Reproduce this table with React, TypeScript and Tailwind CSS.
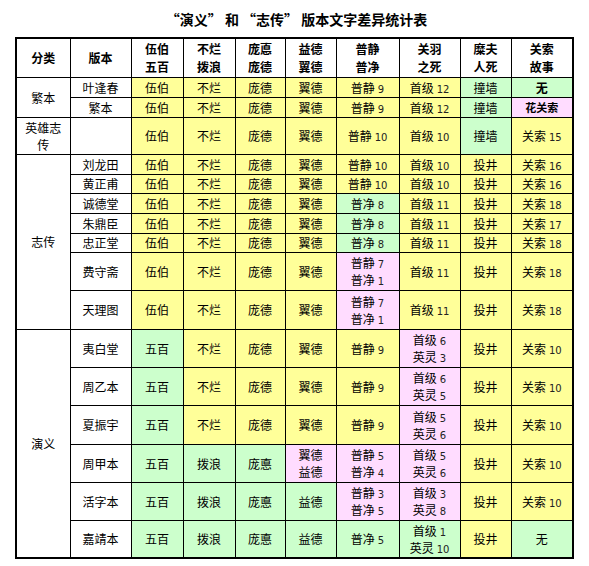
import React from "react";

type Line = [string, string?];
type Cell = { l: Line[]; c: string; b?: string };

const Y = "bg-[#ffff99]";
const G = "bg-[#ccffcc]";
const P = "bg-[#ffdcff]";

const c = (color: string, ...l: Line[]): Cell => ({ l, c: color });

type Row = {
  cat?: { label: React.ReactNode; span: number };
  ver: string;
  h: string;
  cells: Cell[];
};

const base = (
  wb: Cell,
  bl: Cell,
  pd: Cell,
  yd: Cell,
  pj: Cell,
  sj: Cell,
  mf: Cell,
  gs: Cell
): Cell[] => [wb, bl, pd, yd, pj, sj, mf, gs];

const rows: Row[] = [
  {
    cat: { label: "繁本", span: 2 },
    ver: "叶逢春",
    h: "h-[20px]",
    cells: base(
      c(Y, ["伍伯"]), c(Y, ["不烂"]), c(Y, ["庞德"]), c(Y, ["翼德"]),
      c(Y, ["普静", "9"]), c(Y, ["首级", "12"]), c(G, ["撞墙"]),
      { l: [["无"]], c: G, b: "font-bold" }
    ),
  },
  {
    ver: "繁本",
    h: "h-[20px]",
    cells: base(
      c(Y, ["伍伯"]), c(Y, ["不烂"]), c(Y, ["庞德"]), c(Y, ["翼德"]),
      c(Y, ["普静", "9"]), c(Y, ["首级", "12"]), c(G, ["撞墙"]),
      { l: [["花关索"]], c: P, b: "font-bold text-[11px]" }
    ),
  },
  {
    cat: { label: (<>英雄志<br />传</>), span: 1 },
    ver: "",
    h: "h-[37px]",
    cells: base(
      c(Y, ["伍伯"]), c(Y, ["不烂"]), c(Y, ["庞德"]), c(Y, ["翼德"]),
      c(Y, ["普静", "10"]), c(Y, ["首级", "10"]), c(G, ["撞墙"]), c(Y, ["关索", "15"])
    ),
  },
  {
    cat: { label: "志传", span: 7 },
    ver: "刘龙田",
    h: "h-[20px]",
    cells: base(
      c(Y, ["伍伯"]), c(Y, ["不烂"]), c(Y, ["庞德"]), c(Y, ["翼德"]),
      c(Y, ["普静", "10"]), c(Y, ["首级", "10"]), c(Y, ["投井"]), c(Y, ["关索", "16"])
    ),
  },
  {
    ver: "黄正甫",
    h: "h-[19px]",
    cells: base(
      c(Y, ["伍伯"]), c(Y, ["不烂"]), c(Y, ["庞德"]), c(Y, ["翼德"]),
      c(Y, ["普静", "10"]), c(Y, ["首级", "10"]), c(Y, ["投井"]), c(Y, ["关索", "16"])
    ),
  },
  {
    ver: "诚德堂",
    h: "h-[20px]",
    cells: base(
      c(Y, ["伍伯"]), c(Y, ["不烂"]), c(Y, ["庞德"]), c(Y, ["翼德"]),
      c(G, ["普净", "8"]), c(Y, ["首级", "11"]), c(Y, ["投井"]), c(Y, ["关索", "18"])
    ),
  },
  {
    ver: "朱鼎臣",
    h: "h-[20px]",
    cells: base(
      c(Y, ["伍伯"]), c(Y, ["不烂"]), c(Y, ["庞德"]), c(Y, ["翼德"]),
      c(G, ["普净", "8"]), c(Y, ["首级", "11"]), c(Y, ["投井"]), c(Y, ["关索", "17"])
    ),
  },
  {
    ver: "忠正堂",
    h: "h-[19px]",
    cells: base(
      c(Y, ["伍伯"]), c(Y, ["不烂"]), c(Y, ["庞德"]), c(Y, ["翼德"]),
      c(G, ["普净", "8"]), c(Y, ["首级", "11"]), c(Y, ["投井"]), c(Y, ["关索", "18"])
    ),
  },
  {
    ver: "费守斋",
    h: "h-[38px]",
    cells: base(
      c(Y, ["伍伯"]), c(Y, ["不烂"]), c(Y, ["庞德"]), c(Y, ["翼德"]),
      c(P, ["普静", "7"], ["普净", "1"]), c(Y, ["首级", "11"]), c(Y, ["投井"]), c(Y, ["关索", "18"])
    ),
  },
  {
    ver: "天理图",
    h: "h-[39px]",
    cells: base(
      c(Y, ["伍伯"]), c(Y, ["不烂"]), c(Y, ["庞德"]), c(Y, ["翼德"]),
      c(P, ["普静", "7"], ["普净", "1"]), c(Y, ["首级", "11"]), c(Y, ["投井"]), c(Y, ["关索", "18"])
    ),
  },
  {
    cat: { label: "演义", span: 6 },
    ver: "夷白堂",
    h: "h-[38px]",
    cells: base(
      c(G, ["五百"]), c(Y, ["不烂"]), c(Y, ["庞德"]), c(Y, ["翼德"]),
      c(Y, ["普静", "9"]), c(P, ["首级", "6"], ["英灵", "3"]), c(Y, ["投井"]), c(Y, ["关索", "10"])
    ),
  },
  {
    ver: "周乙本",
    h: "h-[38px]",
    cells: base(
      c(G, ["五百"]), c(Y, ["不烂"]), c(Y, ["庞德"]), c(Y, ["翼德"]),
      c(Y, ["普静", "9"]), c(P, ["首级", "6"], ["英灵", "5"]), c(Y, ["投井"]), c(Y, ["关索", "10"])
    ),
  },
  {
    ver: "夏振宇",
    h: "h-[39px]",
    cells: base(
      c(G, ["五百"]), c(Y, ["不烂"]), c(Y, ["庞德"]), c(Y, ["翼德"]),
      c(Y, ["普静", "9"]), c(P, ["首级", "5"], ["英灵", "6"]), c(Y, ["投井"]), c(Y, ["关索", "10"])
    ),
  },
  {
    ver: "周甲本",
    h: "h-[38px]",
    cells: base(
      c(G, ["五百"]), c(G, ["拨浪"]), c(G, ["庞悳"]), c(P, ["翼德"], ["益德"]),
      c(P, ["普静", "5"], ["普净", "4"]), c(P, ["首级", "5"], ["英灵", "6"]), c(Y, ["投井"]), c(Y, ["关索", "10"])
    ),
  },
  {
    ver: "活字本",
    h: "h-[38px]",
    cells: base(
      c(G, ["五百"]), c(G, ["拨浪"]), c(G, ["庞悳"]), c(G, ["益德"]),
      c(P, ["普静", "3"], ["普净", "5"]), c(P, ["首级", "3"], ["英灵", "8"]), c(Y, ["投井"]), c(Y, ["关索", "10"])
    ),
  },
  {
    ver: "嘉靖本",
    h: "h-[38px]",
    cells: base(
      c(G, ["五百"]), c(G, ["拨浪"]), c(G, ["庞悳"]), c(G, ["益德"]),
      c(G, ["普净", "5"]), c(G, ["首级", "1"], ["英灵", "10"]), c(Y, ["投井"]), c(G, ["无"])
    ),
  },
];

const headers: string[][] = [
  ["伍伯", "五百"],
  ["不烂", "拨浪"],
  ["庞悳", "庞德"],
  ["益德", "翼德"],
  ["普静", "普净"],
  ["关羽", "之死"],
  ["糜夫", "人死"],
  ["关索", "故事"],
];

const widths = [
  "w-[54px]", "w-[61px]", "w-[52px]", "w-[52px]", "w-[50px]",
  "w-[51px]", "w-[63px]", "w-[61px]", "w-[51px]", "w-[62px]",
];

const td = "border border-black text-center align-middle p-0 leading-[17px]";

function CellView({ cell }: { cell: Cell }) {
  return (
    <td className={`${td} ${cell.c}`}>
      <div className={`flex flex-col items-center ${cell.b ?? ""}`}>
        {cell.l.map((ln, i) => (
          <div key={i} className="whitespace-nowrap h-[17px] leading-[17px]">
            {ln[0]}
            {ln[1] !== undefined && (
              <span className="font-['DejaVu_Sans',sans-serif] text-[10px] leading-none text-[#222] ml-[3px]">
                {ln[1]}
              </span>
            )}
          </div>
        ))}
      </div>
    </td>
  );
}

export default function App() {
  return (
    <div className="w-[589px] h-[566px] bg-white text-black font-['Noto_Sans_CJK_SC',sans-serif] text-[12px]">
      <div className="h-[37px] flex items-center justify-center text-[14px] font-bold pt-[1px] pl-[4px]">
        “演义” 和 “志传” 版本文字差异统计表
      </div>
      <table className="ml-[15px] border-collapse table-fixed border-2 border-black w-[558px]">
        <colgroup>
          {widths.map((w, i) => (
            <col key={i} className={w} />
          ))}
        </colgroup>
        <tbody>
          <tr className="h-[39px] font-bold">
            <td className={td}>分类</td>
            <td className={td}>版本</td>
            {headers.map((h, i) => (
              <td key={i} className={td}>
                <div className="flex flex-col items-center">
                  <div className="h-[18px] leading-[18px]">{h[0]}</div>
                  <div className="h-[18px] leading-[18px]">{h[1]}</div>
                </div>
              </td>
            ))}
          </tr>
          {rows.map((r, i) => (
            <tr key={i} className={r.h}>
              {r.cat && (
                <td rowSpan={r.cat.span} className={td}>
                  {r.cat.label}
                </td>
              )}
              <td className={td}>{r.ver}</td>
              {r.cells.map((cell, j) => (
                <CellView key={j} cell={cell} />
              ))}
            </tr>
          ))}
        </tbody>
      </table>
    </div>
  );
}
